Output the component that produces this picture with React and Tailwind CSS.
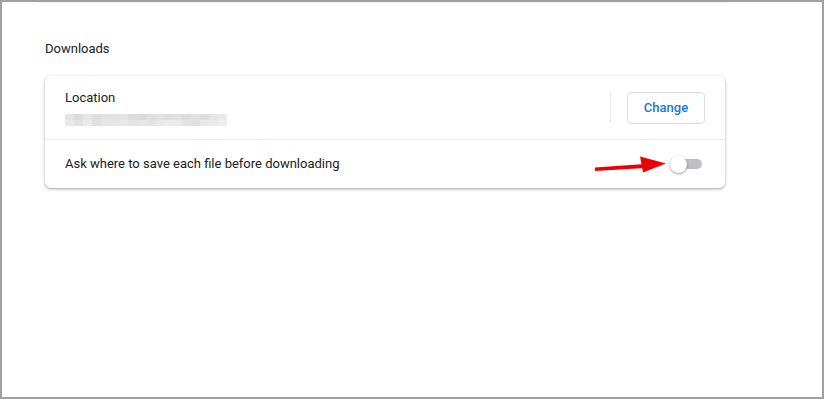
import React from "react"

const blocks = [
  ["#e4e4e6", "#e9e9ea"],
  ["#dcdcde", "#e2e2e4"],
  ["#e6e6e8", "#ebebec"],
  ["#dededf", "#e0e0e2"],
  ["#e0e1e4", "#e6e6e8"],
  ["#e3e1e2", "#e6e6e7"],
  ["#e4e4e6", "#e9e8e8"],
  ["#dcdcde", "#e4e4e5"],
  ["#dadade", "#e6e6e8"],
  ["#dfdfe1", "#e3e3e4"],
  ["#e2e2e4", "#e7e7e9"],
  ["#dfdfe2", "#ececed"],
  ["#e4e0e1", "#ebebec"],
  ["#dcdce0", "#e3e3e5"],
  ["#e1e1e3", "#dfdfe2"],
  ["#dddde1", "#e9e9ea"],
  ["#e6e6e7", "#ebebed"],
  ["#eaeaeb", "#eeeeef"],
]

const Pixelated = () => (
  <div className="flex mt-[8px]">
    { blocks.map(([a, b], i) =>
      <div key={ i } className="flex flex-col w-[9px]">
        <div className="h-[6px]" style={ { background: a } }/>
        <div className="h-[6px]" style={ { background: b } }/>
      </div>
    ) }
  </div>
)

const Arrow = () => (
  <svg width="74" height="20" viewBox="0 0 74 20" className="mr-[3px]">
    <path d="M2 13.5 L52 10 L52 14 L2 17 Z" fill="#ee0000"/>
    <path d="M47 2.5 L73 9.5 L50 18.5 Z" fill="#ee0000"/>
  </svg>
)

const Toggle = () => (
  <div className="relative w-[34px] h-[18px] flex items-center">
    <div className="absolute left-[2px] right-[2px] h-[10px] rounded-full bg-[#bdc1c6]"/>
    <div className="absolute left-0 w-[17px] h-[17px] rounded-full bg-white shadow-[0_1px_3px_rgba(0,0,0,0.4)]"/>
  </div>
)

export default function App() {
  return (
    <div className="w-[824px] h-[399px] border-2 border-[#a0a0a0] bg-white relative overflow-hidden"
      style={ { fontFamily: "Roboto, 'Liberation Sans', sans-serif" } }>
      <div className="absolute top-0 left-[35px] w-[690px] h-px bg-[#f3f4f5]"/>
      <div className="pl-[43px] pt-[37px]">
        <div className="text-[13px] leading-[20px] text-[#202124]">Downloads</div>
        <div className="mt-[17px] w-[680px] rounded-[6px] bg-white shadow-[0_1px_3px_1px_rgba(60,64,67,0.15),0_1px_2px_rgba(60,64,67,0.3)]">
          <div className="h-[64px] pl-[20px] pr-[20px] flex items-center border-b border-[#e8eaed]">
            <div className="flex-1 flex flex-col">
              <div className="text-[13px] leading-[16px] text-[#202124]">Location</div>
              <Pixelated/>
            </div>
            <div className="w-px h-[31px] bg-[#e8eaed] mr-[16px]"/>
            <button className="w-[78px] h-[32px] rounded-[4px] border border-[#dadce0] text-[13px] font-medium text-[#1a73e8] bg-white">
              Change
            </button>
          </div>
          <div className="h-[48px] pl-[20px] pr-[21px] flex items-center">
            <div className="flex-1 text-[13px] text-[#202124]">Ask where to save each file before downloading</div>
            <Arrow/>
            <Toggle/>
          </div>
        </div>
      </div>
    </div>
  )
}
